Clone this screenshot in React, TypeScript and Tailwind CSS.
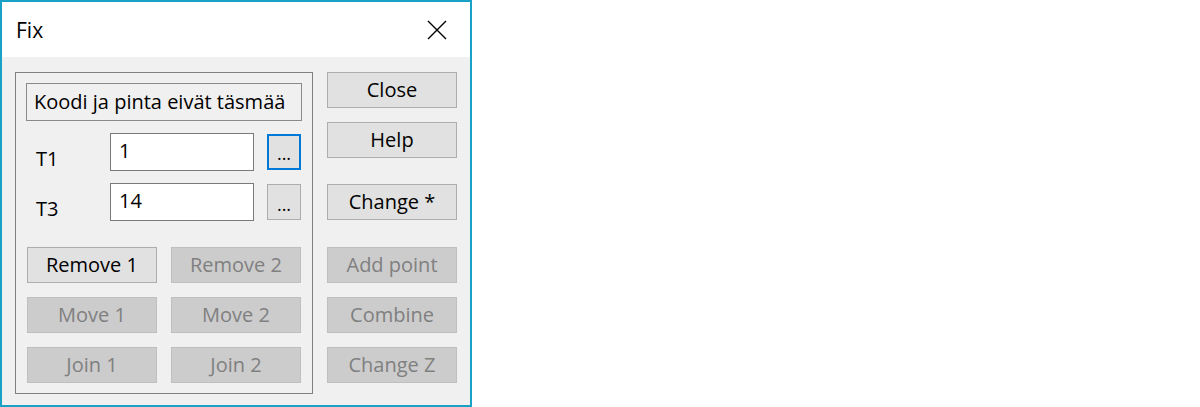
const font = { fontFamily: '"Open Sans", "Noto Sans", sans-serif' }

const Btn = ({ label, disabled = false, extra = "" }: { label: React.ReactNode; disabled?: boolean; extra?: string }) => (
  <div
    className={`w-[130px] h-[36px] flex items-center justify-center border text-[20px] ${
      disabled ? "bg-[#cccccc] border-[#bfbfbf] text-[#808080]" : "bg-[#e1e1e1] border-[#adadad] text-black"
    } ${extra}`}
  >
    {label}
  </div>
)

const Field = ({ name, value, focused = false }: { name: string; value: string; focused?: boolean }) => (
  <div className="flex items-center h-[38px]">
    <div className="w-[84px] pl-[10px] pt-[14px] text-[20px] text-black">{name}</div>
    <div className="w-[144px] h-[38px] bg-white border border-[#7a7a7a] pl-[8px] pt-[4px] text-[20px] text-black leading-tight">
      {value}
    </div>
    <div
      className={`ml-[13px] w-[34px] h-[36px] flex items-end justify-center pb-[6px] bg-[#e1e1e1] text-[18px] leading-none text-black ${
        focused ? "border-2 border-[#0078d7]" : "border border-[#adadad]"
      }`}
    >
      ...
    </div>
  </div>
)

const App = () => {
  return (
    <div className="w-[1200px] h-[407px] bg-white" style={font}>
      <div className="w-[472px] h-[407px] border-2 border-[#18a2c6] flex flex-col">
        <div className="h-[55px] bg-white flex items-center justify-between pl-[14px] pr-[23px]">
          <span className="text-[21px] text-black pt-[3px]">Fix</span>
          <svg width="20" height="20" viewBox="0 0 20 20">
            <path d="M1 1 L19 19 M19 1 L1 19" stroke="#000" strokeWidth="1.4" fill="none" />
          </svg>
        </div>

        <div className="flex-1 bg-[#f0f0f0] flex pt-[15px] pl-[13px] gap-[14px]">
          <div className="w-[298px] h-[322px] border border-[#808080] flex flex-col pl-[10px] pt-[10px]">
            <div className="w-[276px] h-[38px] border border-[#8a8a8a] flex items-center pl-[7px] text-[20px] text-black whitespace-nowrap">
              Koodi ja pinta eivät täsmää
            </div>
            <div className="mt-[12px] flex flex-col gap-[12px]">
              <Field name="T1" value="1" focused />
              <Field name="T3" value="14" />
            </div>
            <div className="mt-[26px] ml-[1px] grid grid-cols-[130px_130px] gap-x-[14px] gap-y-[14px]">
              <Btn label="Remove 1" />
              <Btn label="Remove 2" disabled />
              <Btn label="Move 1" disabled />
              <Btn label="Move 2" disabled />
              <Btn label="Join 1" disabled />
              <Btn label="Join 2" disabled />
            </div>
          </div>

          <div className="flex flex-col">
            <Btn label="Close" />
            <Btn label="Help" extra="mt-[14px]" />
            <Btn label="Change *" extra="mt-[26px]" />
            <Btn label="Add point" disabled extra="mt-[27px]" />
            <Btn label="Combine" disabled extra="mt-[14px]" />
            <Btn label="Change Z" disabled extra="mt-[14px]" />
          </div>
        </div>
      </div>
    </div>
  )
}

export default App
